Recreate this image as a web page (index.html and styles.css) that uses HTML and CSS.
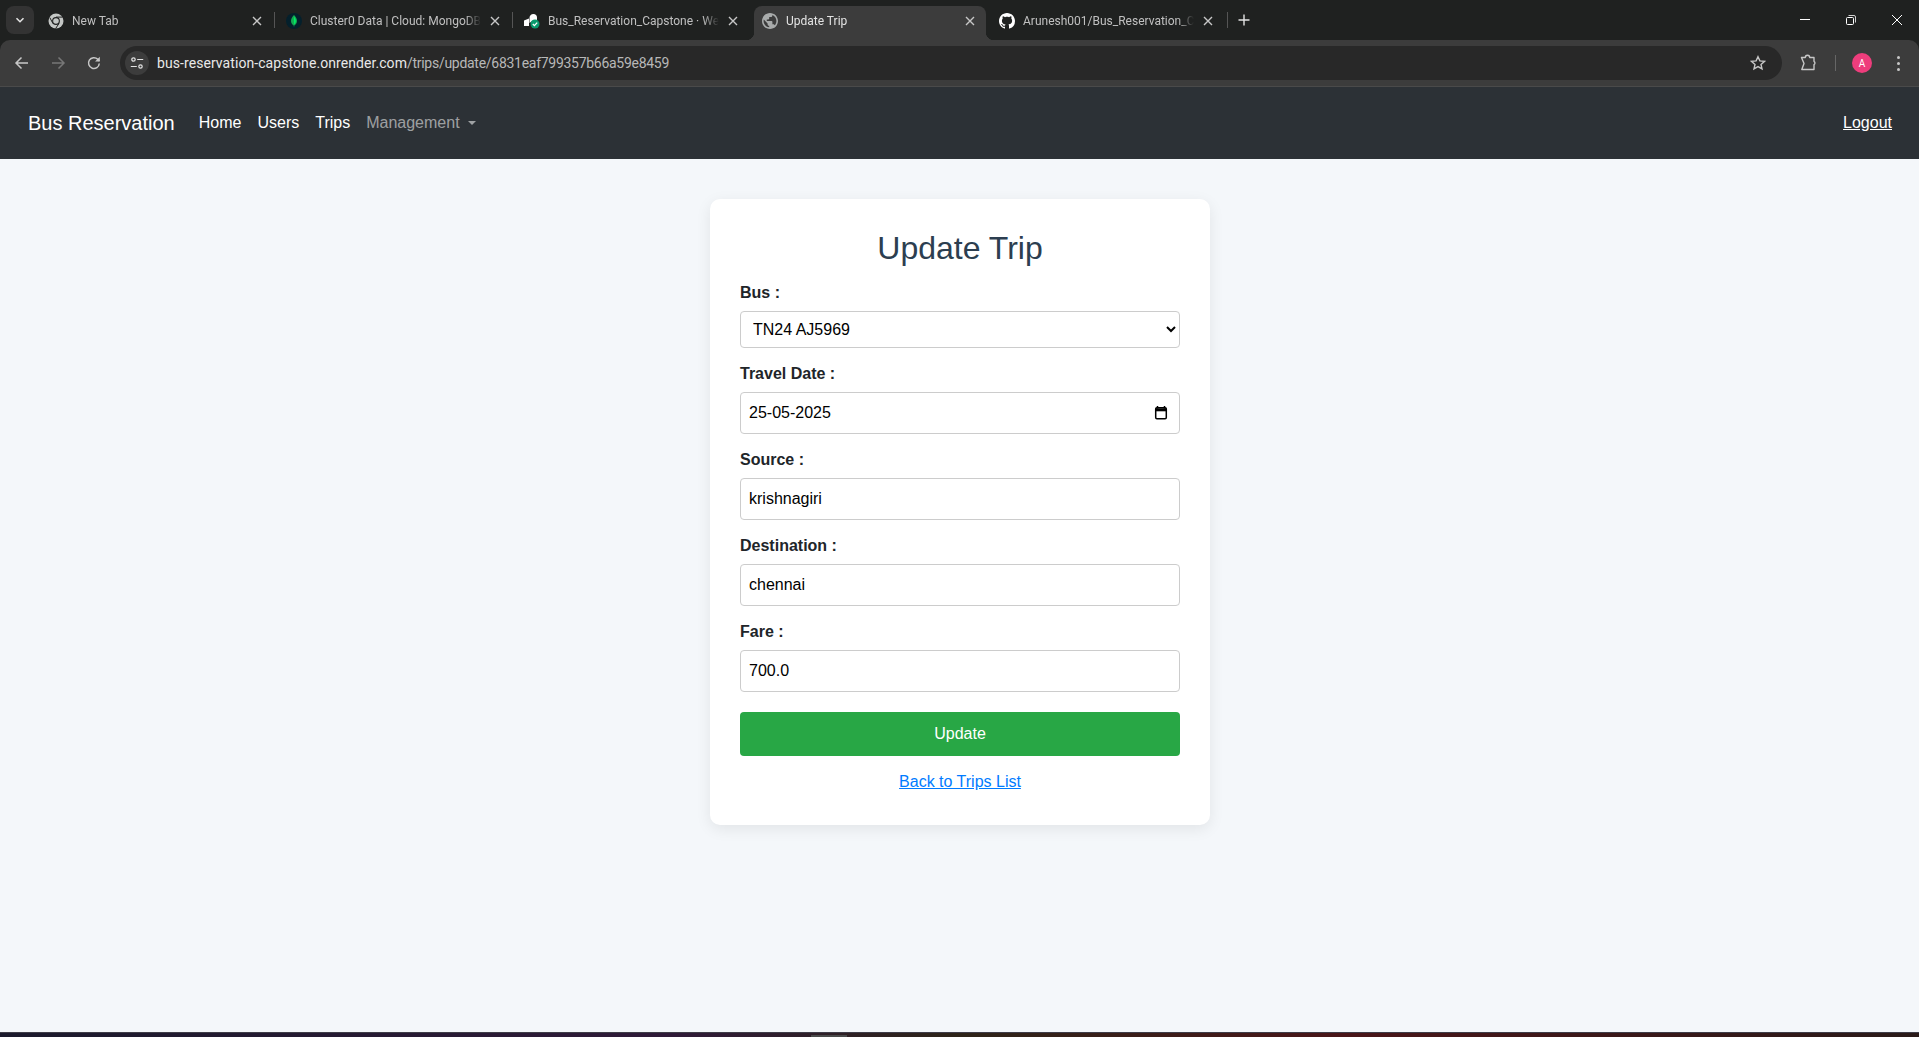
FILE: index.html
```html
<!DOCTYPE html>
<html lang="en">
<head>
    <meta charset="utf-8" />
    <title>Update Trip</title>
    <meta name="viewport" content="width=device-width, initial-scale=1" />
    <link rel="stylesheet" href="styles.css">
</head>
<body>
<div class="window">
    <div class="browser">
        <div class="tabstrip">
            <div class="tab-search">
                <svg width="12" height="12" viewBox="0 0 12 12"><path d="M2.5 4.2 6 7.7l3.5-3.5" fill="none" stroke="#e3e3e3" stroke-width="1.6"/></svg>
            </div>
            <div class="tab">
                <svg class="favicon" viewBox="0 0 16 16">
                    <circle cx="8" cy="8" r="7.5" fill="#c4c7c5"/>
                    <circle cx="8" cy="8" r="3.9" fill="#1f2120"/>
                    <circle cx="8" cy="8" r="2.8" fill="#c4c7c5"/>
                    <path d="M8 4.1h6.6M5 10.6 1.8 4.6M10.9 10.6 7.6 15.6" stroke="#1f2120" stroke-width="1" fill="none"/>
                </svg>
                <span class="tab-title">New Tab</span>
                <svg class="tab-close" viewBox="0 0 16 16"><path d="M4 4l8 8M12 4l-8 8"/></svg>
            </div>
            <div class="tab">
                <svg class="favicon" viewBox="0 0 16 16">
                    <circle cx="8" cy="8" r="8" fill="#04202c"/>
                    <path d="M8 2c2 2 3 4 3 6 0 2.2-1.400 3.700-2.700 4.500L8 14.500l-.3-2C6.400 11.700 5 10.200 5 8c0-2 1-4 3-6z" fill="#13aa52"/>
                    <path d="M8 3.500c1.300 1.500 1.800 3 1.800 4.500S9 10.600 8 11.400z" fill="#00ed64"/>
                </svg>
                <span class="tab-title">Cluster0 Data | Cloud: MongoDB Cloud</span>
                <svg class="tab-close" viewBox="0 0 16 16"><path d="M4 4l8 8M12 4l-8 8"/></svg>
            </div>
            <div class="tab tab-nosep">
                <svg class="favicon" viewBox="0 0 16 16">
                    <path d="M0 7.500 5 5.500V13H0z" fill="#fff"/>
                    <path d="M5.500 5.500a4 4 0 0 1 4-4.500c2 0 3.500 1.500 3.500 3.500V7H9.500L5.500 10z" fill="#fff"/>
                    <circle cx="11" cy="11" r="4.500" fill="#0a9a6d"/>
                    <path d="M8.800 11l1.600 1.600 2.800-3" fill="none" stroke="#fff" stroke-width="1.300"/>
                </svg>
                <span class="tab-title">Bus_Reservation_Capstone · Web Service</span>
                <svg class="tab-close" viewBox="0 0 16 16"><path d="M4 4l8 8M12 4l-8 8"/></svg>
            </div>
            <div class="tab tab-active">
                <svg class="favicon" viewBox="2 2 20 20"><path fill="#a8abab" d="M12 2C6.48 2 2 6.48 2 12s4.48 10 10 10 10-4.48 10-10S17.52 2 12 2zm-1 17.930c-3.950-.490-7-3.850-7-7.930 0-.620.080-1.210.210-1.790L9 15v1c0 1.100.900 2 2 2v1.930zm6.900-2.540c-.260-.810-1-1.390-1.900-1.390h-1v-3c0-.550-.450-1-1-1H8v-2h2c.550 0 1-.450 1-1V7h2c1.100 0 2-.900 2-2v-.410c2.930 1.190 5 4.060 5 7.410 0 2.080-.800 3.970-2.100 5.390z"/></svg>
                <span class="tab-title">Update Trip</span>
                <svg class="tab-close" viewBox="0 0 16 16"><path d="M4 4l8 8M12 4l-8 8"/></svg>
            </div>
            <div class="tab tab-last">
                <svg class="favicon" viewBox="0 0 16 16"><path fill="#fff" d="M8 0C3.580 0 0 3.580 0 8c0 3.540 2.290 6.530 5.470 7.590.400.070.550-.170.550-.380 0-.190-.010-.820-.010-1.490-2.010.370-2.530-.490-2.690-.940-.090-.230-.480-.940-.820-1.130-.280-.150-.680-.520-.010-.530.630-.010 1.080.580 1.230.820.720 1.210 1.870.870 2.330.660.070-.520.280-.870.510-1.070-1.780-.200-3.640-.890-3.640-3.950 0-.870.310-1.590.820-2.150-.080-.200-.360-1.020.080-2.120 0 0 .670-.210 2.200.820.640-.180 1.320-.270 2-.270.680 0 1.360.090 2 .270 1.530-1.040 2.200-.820 2.200-.820.440 1.100.160 1.920.080 2.120.510.560.820 1.270.820 2.150 0 3.070-1.870 3.750-3.650 3.950.290.250.540.730.540 1.480 0 1.070-.010 1.930-.010 2.200 0 .210.150.460.550.380A8.013 8.013 0 0016 8c0-4.420-3.580-8-8-8z"/></svg>
                <span class="tab-title">Arunesh001/Bus_Reservation_Capstone</span>
                <svg class="tab-close" viewBox="0 0 16 16"><path d="M4 4l8 8M12 4l-8 8"/></svg>
            </div>
            <div class="new-tab">
                <svg width="14" height="14" viewBox="0 0 14 14"><path d="M7 1.500v11M1.500 7h11" stroke="#e3e3e3" stroke-width="1.400" fill="none"/></svg>
            </div>
            <div class="win-controls">
                <div class="win-btn"><svg width="12" height="12" viewBox="0 0 12 12"><path d="M1 5.500h10" stroke="#fff" fill="none"/></svg></div>
                <div class="win-btn"><svg width="12" height="12" viewBox="0 0 12 12"><rect x="1.500" y="3.500" width="7" height="7" rx="1" fill="none" stroke="#fff"/><path d="M3.500 1.500h5.500a1.500 1.500 0 0 1 1.500 1.500v5.500" fill="none" stroke="#fff" stroke-width=".8"/></svg></div>
                <div class="win-btn"><svg width="12" height="12" viewBox="0 0 12 12"><path d="M1 1l10 10M11 1 1 11" stroke="#fff" fill="none"/></svg></div>
            </div>
        </div>

        <div class="toolbar">
            <div class="tool-btn">
                <svg width="16" height="16" viewBox="0 0 16 16"><path d="M14 8H2.500M7.500 2.500 2 8l5.500 5.500" fill="none" stroke="#c7c7c7" stroke-width="1.500"/></svg>
            </div>
            <div class="tool-btn">
                <svg width="16" height="16" viewBox="0 0 16 16"><path d="M2 8h11.500M8.500 2.500 14 8l-5.500 5.500" fill="none" stroke="#777" stroke-width="1.500"/></svg>
            </div>
            <div class="tool-btn">
                <svg width="16" height="16" viewBox="0 0 16 16"><path d="M13.300 8.500a5.400 5.400 0 1 1-1.500-4.200l1.500 1.700" fill="none" stroke="#c7c7c7" stroke-width="1.500"/><path d="M13.800 1.800v4.700H9.100z" fill="#c7c7c7"/></svg>
            </div>
            <div class="omnibox">
                <div class="site-info">
                    <svg width="14" height="14" viewBox="0 0 14 14" fill="none" stroke="#e3e3e3" stroke-width="1.200"><circle cx="3.500" cy="3.500" r="1.700"/><path d="M7.200 3.500h6M.8 10.500h6"/><circle cx="10.500" cy="10.500" r="1.700"/></svg>
                </div>
                <span class="url"><span class="url-host">bus-reservation-capstone.onrender.com</span><span class="url-path">/trips/update/6831eaf799357b66a59e8459</span></span>
                <svg class="star" width="16" height="16" viewBox="0 0 16 16"><path d="M8 1.700l1.900 4.200 4.500.5-3.400 3 1 4.500L8 11.600l-4 2.300 1-4.500-3.400-3 4.500-.5z" fill="none" stroke="#c7c7c7" stroke-width="1.400"/></svg>
            </div>
            <div class="tool-btn tool-ext">
                <svg width="18" height="18" viewBox="0 0 18 18"><path d="M2.500 3.500H6.300a2.200 2.200 0 0 1 4.400 0H15V7.300a2 2 0 0 1 0 3.400v4.800H2.800L5 9.500z" fill="none" stroke="#c7c7c7" stroke-width="1.400" stroke-linejoin="round"/></svg>
            </div>
            <div class="tool-sep"></div>
            <div class="avatar">A</div>
            <div class="tool-btn tool-menu">
                <span class="dot"></span><span class="dot"></span><span class="dot"></span>
            </div>
        </div>
    </div>

    <nav class="navbar">
        <a class="brand" href="#">Bus Reservation</a>
        <a class="nav-link" href="#">Home</a>
        <a class="nav-link" href="#">Users</a>
        <a class="nav-link" href="#">Trips</a>
        <a class="nav-link nav-muted" href="#">Management<span class="caret"></span></a>
        <a class="logout" href="#">Logout</a>
    </nav>

    <main class="page">
        <form class="card">
            <h2>Update Trip</h2>
            <div class="form-group">
                <label for="bus">Bus :</label>
                <select id="bus" class="field-select">
                    <option>TN24 AJ5969</option>
                </select>
            </div>
            <div class="form-group">
                <label for="travel_date">Travel Date :</label>
                <div class="date-wrap">
                    <input id="travel_date" type="text" value="25-05-2025">
                    <svg class="date-icon" width="16" height="16" viewBox="0 0 16 16"><path d="M4.500 1v2.500M11.500 1v2.500" stroke="#000" stroke-width="1.500"/><rect x="2.700" y="2.700" width="10.600" height="11.100" rx="1.200" fill="none" stroke="#000" stroke-width="1.500"/><path d="M2.500 4.800h11" stroke="#000" stroke-width="3"/></svg>
                </div>
            </div>
            <div class="form-group">
                <label for="source">Source :</label>
                <input id="source" type="text" value="krishnagiri">
            </div>
            <div class="form-group">
                <label for="destination">Destination :</label>
                <input id="destination" type="text" value="chennai">
            </div>
            <div class="form-group">
                <label for="fare">Fare :</label>
                <input id="fare" type="text" value="700.0">
            </div>
            <button type="button" class="btn-update">Update</button>
            <p class="back-link"><a href="#">Back to Trips List</a></p>
        </form>
    </main>

    <div class="taskbar"><span class="task-thumb"></span></div>
</div>
</body>
</html>
```

FILE: styles.css
```css
html, body { height: 100%; }
body {
    margin: 0; padding: 0; overflow: hidden;
    background-color: #f4f7fa;
    font: 16px "Liberation Sans", Arial, sans-serif;
    color: #212529;
}
.window { display: flex; flex-direction: column; height: 100vh; }
.browser { flex: none; background-color: #1f2120; }

/* browser tabs */
.tabstrip {
    display: flex; align-items: flex-end;
    height: 40px; padding-left: 6px;
    font: 12px Roboto, "Noto Sans", sans-serif; color: #c0c0c0;
}
.tab-search {
    display: flex; align-items: center; justify-content: center; flex: none;
    width: 28px; height: 28px; margin: 0 2px 6px 0;
    background-color: #333; border-radius: 8px;
}
.tab {
    position: relative; display: flex; align-items: center; flex: none;
    box-sizing: border-box; width: 238px; height: 34px; padding: 0 9px 5px 12px;
}
.tab::after {
    content: ""; position: absolute; right: -1px; top: 6px;
    width: 1px; height: 16px; background-color: #555;
}
.tab-nosep::after { display: none; }
.tab-active {
    width: 232px; margin: 0 1px 0 4px; padding: 0 8px 5px 8px;
    background-color: #3c3c3c; border-radius: 8px 8px 0 0;
    color: #e3e3e3;
}
.tab-active::before, .tab-active::after {
    content: ""; position: absolute; bottom: 0; top: auto;
    width: 8px; height: 8px; background-color: transparent;
}
.tab-active::before {
    left: -8px;
    background: radial-gradient(circle at 0 0, transparent 8px, #3c3c3c 8.5px);
}
.tab-active::after {
    right: -8px;
    background: radial-gradient(circle at 100% 0, transparent 8px, #3c3c3c 8.5px);
}
.tab-last { width: 240px; padding-right: 11px; }
.favicon { width: 16px; height: 16px; flex: none; margin-right: 8px; }
.tab-title {
    flex: 1; min-width: 0; overflow: hidden; white-space: nowrap;
    -webkit-mask-image: linear-gradient(to right, #000 calc(100% - 16px), transparent);
    mask-image: linear-gradient(to right, #000 calc(100% - 16px), transparent);
}
.tab-close {
    width: 16px; height: 16px; flex: none; margin-left: 6px;
    fill: none; stroke: #c7c7c7; stroke-width: 1.4;
}
.new-tab {
    display: flex; align-items: center; justify-content: center; flex: none;
    width: 20px; height: 20px; margin: 0 0 10px 7px;
}
.win-controls { display: flex; margin-left: auto; margin-right: -1px; align-self: flex-start; }
.win-btn {
    display: flex; align-items: center; justify-content: center;
    width: 46px; height: 40px;
}

/* address bar row */
.toolbar {
    display: flex; align-items: center;
    height: 46px; padding: 0 3px 0 4px;
    background-color: #3c3c3c; border-radius: 10px 10px 0 0;
    border-bottom: 1px solid #4a4a4a;
}
.tool-btn {
    display: flex; align-items: center; justify-content: center; flex: none;
    width: 36px; height: 34px;
}
.omnibox {
    display: flex; align-items: center; flex: 1; min-width: 0;
    height: 34px; margin-left: 8px; padding: 0 16px 0 5px;
    background-color: #282828; border-radius: 17px;
}
.site-info {
    display: flex; align-items: center; justify-content: center; flex: none;
    width: 24px; height: 24px; border-radius: 50%;
    background-color: #3c3c3c;
}
.url {
    flex: 1; margin-left: 8px; white-space: nowrap;
    font: 14px Roboto, "Noto Sans", sans-serif;
}
.url-host { color: #e8e8e8; letter-spacing: .07px; }
.url-path { color: #b8b8b8; letter-spacing: -.28px; }
.star { flex: none; }
.tool-ext { margin-left: 8px; }
.tool-sep { flex: none; width: 1px; height: 16px; margin-left: 9px; background-color: #666; }
.avatar {
    display: flex; align-items: center; justify-content: center; flex: none;
    width: 20px; height: 20px; margin-left: 16px;
    background-color: #ee3d7c; border-radius: 50%;
    font: 10px Roboto, sans-serif; color: #fff;
}
.tool-menu { flex-direction: column; gap: 3px; margin-left: 8px; }
.dot { width: 3px; height: 3px; border-radius: 50%; background-color: #c7c7c7; }

/* site navbar */
.navbar {
    display: flex; align-items: center; flex: none;
    height: 72px; padding: 0 27px 0 28px;
    background-color: #2c3136;
}
.navbar a { color: #fff; text-decoration: none; }
.brand { font-size: 20px; margin-right: 16px; }
.nav-link { padding: 8px; }
.navbar .nav-muted { color: rgba(255, 255, 255, .55); }
.caret {
    display: inline-block; margin-left: 8px; vertical-align: 3px;
    border-top: 4.800px solid; border-left: 4.800px solid transparent;
    border-right: 4.800px solid transparent;
}
.navbar .logout { margin-left: auto; text-decoration: underline; }

/* update form */
.page { flex: 1; min-height: 0; padding-left: 1px; }
.card {
    box-sizing: border-box; width: 500px; height: 626px; margin: 40px auto 0;
    padding: 30px; background-color: #fff; border-radius: 10px;
    box-shadow: 0 4px 15px rgba(0, 0, 0, .08);
}
h2 {
    margin: 0 0 14px; text-align: center;
    font-size: 32px; font-weight: 400; line-height: 38px; color: #2c3e50;
}
.form-group { margin-bottom: 14px; }
label { display: block; margin-bottom: 6px; font-weight: 700; line-height: 24px; }
input, .field-select {
    box-sizing: border-box; display: block; width: 100%;
    border: 1px solid #ccc; border-radius: 4px; background-color: #fff;
    font: 16px "Liberation Sans", Arial, sans-serif; color: #000;
}
input { height: 42px; padding: 0 8px; }
.field-select { height: 37px; padding: 0 8px; }
.date-wrap { position: relative; }
.date-icon { position: absolute; right: 11px; top: 13px; }
.btn-update {
    display: block; width: 100%; height: 44px; margin-top: 20px;
    border: 0; border-radius: 4px; background-color: #28a745;
    font: 16px "Liberation Sans", Arial, sans-serif; color: #fff;
}
.back-link { margin: 14px 0 0; text-align: center; line-height: 24px; }
.back-link a { color: #007bff; }

/* bit of the desktop under the window */
.taskbar {
    position: relative; flex: none; box-sizing: border-box; height: 5px;
    border-top: 1px solid #3f3d48;
    background: linear-gradient(to right, #1b1a2c 0%, #2f1a38 35%, #2e2418 50%, #4a1518 70%, #2a1a18 100%);
}
.task-thumb {
    position: absolute; left: 811px; bottom: 0;
    width: 36px; height: 2px; background-color: #4a4a4a;
}
```
